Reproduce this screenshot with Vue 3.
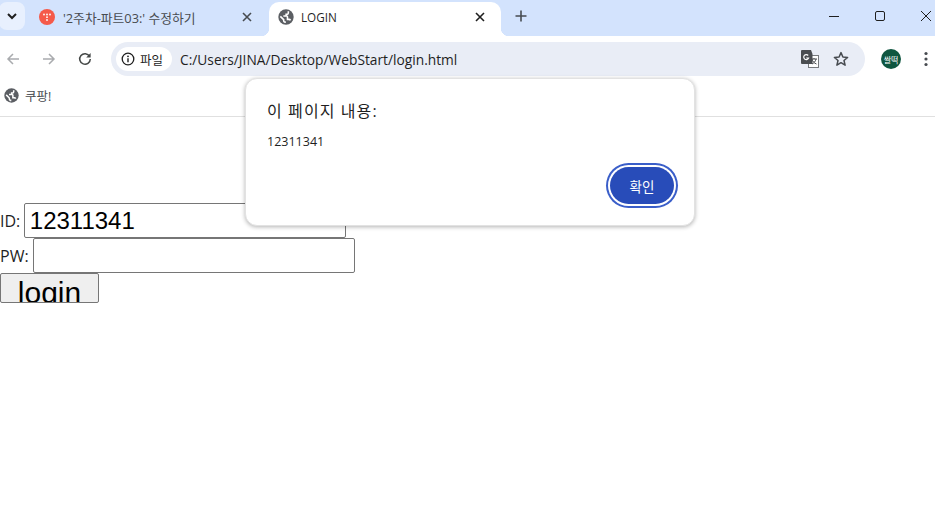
<script setup>
</script>

<template>
  <div class="window">
    <header class="tabstrip">
      <button class="tabsearch">
        <svg width="12" height="12" viewBox="0 0 12 12"><path d="M2 4l4 4 4-4" fill="none" stroke="#1f1f1f" stroke-width="2"/></svg>
      </button>
      <div class="tab">
        <span class="favicon-t"><svg width="12" height="12" viewBox="0 0 12 12" fill="#fff"><circle cx="3" cy="3.5" r=".9"/><circle cx="6" cy="3.5" r=".9"/><circle cx="9" cy="3.5" r=".9"/><circle cx="6" cy="6.2" r=".9"/><circle cx="6" cy="9" r=".9"/></svg></span>
        <span class="tab-title first">'2주차-파트03:' 수정하기</span>
        <svg class="tab-close" width="10" height="10" viewBox="0 0 10 10"><path d="M1 1l8 8M9 1l-8 8" stroke="#474b50" stroke-width="1.6"/></svg>
      </div>
      <div class="tab active">
        <svg class="globe" width="16" height="16" viewBox="0 0 24 24"><circle cx="12" cy="12" r="11.500" fill="#5b5e63"/><path d="M3.500 11l5 5v1.500c0 1 .8 2 2 2V21M8 10.500h5c.7 0 1.200.5 1.200 1.200v3.800h2.300c1 0 1.800.6 2.200 1.500M11 8h2.500c1.200 0 2-1 2-2V3.500" fill="none" stroke="#fff" stroke-width="2.400"/></svg>
        <span class="tab-title dark">LOGIN</span>
        <svg class="tab-close" width="10" height="10" viewBox="0 0 10 10"><path d="M1 1l8 8M9 1l-8 8" stroke="#1f1f1f" stroke-width="1.6"/></svg>
      </div>
      <svg class="newtab" width="12" height="12" viewBox="0 0 12 12"><path d="M6 .5v11M.5 6h11" stroke="#474b50" stroke-width="1.6"/></svg>
      <div class="winctl">
        <svg width="12" height="12" viewBox="0 0 12 12"><path d="M1 6.500h10" stroke="#1f1f1f" stroke-width="1"/></svg>
        <svg width="12" height="12" viewBox="0 0 12 12"><rect x="1.500" y="1.500" width="9" height="9" rx="1.500" fill="none" stroke="#1f1f1f"/></svg>
        <svg width="12" height="12" viewBox="0 0 12 12"><path d="M1 1l10 10M11 1L1 11" stroke="#1f1f1f"/></svg>
      </div>
    </header>

    <nav class="toolbar">
      <svg class="nav-icon" width="14" height="14" viewBox="0 0 14 14"><path d="M13 7H2M7 2L2 7l5 5" fill="none" stroke="#a9abae" stroke-width="1.500"/></svg>
      <svg class="nav-icon" width="14" height="14" viewBox="0 0 14 14"><path d="M1 7h11M7 2l5 5-5 5" fill="none" stroke="#a9abae" stroke-width="1.500"/></svg>
      <svg class="nav-icon" width="14" height="14" viewBox="0 0 14 14"><path d="M11.600 4.300A5.300 5.300 0 1 0 12.300 7" fill="none" stroke="#444746" stroke-width="1.500"/><path d="M12.600 1v4.400H8.200z" fill="#444746"/></svg>
      <div class="omnibox">
        <div class="chip">
          <svg width="14" height="14" viewBox="0 0 14 14"><circle cx="7" cy="7" r="5.800" fill="none" stroke="#1f1f1f" stroke-width="1.300"/><path d="M7 6.200v4" stroke="#1f1f1f" stroke-width="1.400"/><circle cx="7" cy="4.300" r=".9" fill="#1f1f1f"/></svg>
          <span>파일</span>
        </div>
        <span class="url">C:/Users/JINA/Desktop/WebStart/login.html</span>
        <svg class="translate" width="18" height="18" viewBox="0 0 18 18">
          <rect x="7.500" y="5.500" width="10" height="12" fill="#fff" stroke="#777a7e"/>
          <path d="M1 0h9l1.500 4v10H1a1 1 0 0 1-1-1V1a1 1 0 0 1 1-1z" fill="#4a4d51"/>
          <path d="M7.200 5.500A2.500 2.500 0 1 0 7.600 8H5.200" fill="none" stroke="#fff" stroke-width="1.200"/>
          <path d="M10 9h6M13 8v1M11 9c.5 2.500 2 4 4.500 5M15 9c-.5 2.500-2 4-4 5" stroke="#4a4d51" fill="none"/>
        </svg>
        <svg class="star" width="16" height="16" viewBox="0 0 16 16"><path d="M8 1.600l1.900 4.400 4.700.4-3.600 3.100 1.100 4.700L8 11.700l-4.100 2.500L5 9.500 1.400 6.400l4.700-.4z" fill="none" stroke="#474b50" stroke-width="1.500" stroke-linejoin="round"/></svg>
      </div>
      <span class="avatar">쌀떡</span>
      <svg class="menu" width="4" height="16" viewBox="0 0 4 16"><circle cx="2" cy="2.500" r="1.600" fill="#474b50"/><circle cx="2" cy="8" r="1.600" fill="#474b50"/><circle cx="2" cy="13.500" r="1.600" fill="#474b50"/></svg>
    </nav>

    <div class="bookmarks">
      <svg width="15" height="15" viewBox="0 0 24 24"><circle cx="12" cy="12" r="11.500" fill="#5b5e63"/><path d="M3.500 11l5 5v1.500c0 1 .8 2 2 2V21M8 10.500h5c.7 0 1.200.5 1.200 1.200v3.800h2.300c1 0 1.800.6 2.200 1.500M11 8h2.500c1.200 0 2-1 2-2V3.500" fill="none" stroke="#fff" stroke-width="2.400"/></svg>
      <span>쿠팡!</span>
    </div>

    <main class="page">
      <div class="field"><label>ID:</label><input class="box" value="12311341" /></div>
      <div class="field"><label>PW:</label><input class="box" /></div>
      <button class="login">login</button>
    </main>

    <div class="dialog">
      <p class="d-title">이 페이지 내용:</p>
      <p class="d-msg">12311341</p>
      <div class="d-actions"><button class="ok">확인</button></div>
    </div>
  </div>
</template>

<style>
html, body { margin: 0; background: #fff; overflow: hidden; }
</style>

<style scoped>
.window {
  position: relative;
  width: 935px;
  height: 506px;
  overflow: hidden;
  background: #fff;
  font-family: "Open Sans", "Noto Sans CJK KR", sans-serif;
  color: #1f1f1f;
}
.tabstrip {
  display: flex;
  align-items: flex-end;
  height: 36px;
  background: #d3e3fd;
}
.tabsearch {
  align-self: flex-start;
  margin: 2px 0 0 -1px;
  width: 26px;
  height: 28px;
  border: 0;
  border-radius: 8px;
  background: #e8f0fe;
  display: flex;
  align-items: center;
  justify-content: center;
  padding: 0;
}
.tab {
  display: flex;
  align-items: center;
  box-sizing: border-box;
  height: 34px;
  padding: 0 17px 4px 14px;
  font-size: 12px;
  color: #474b50;
}
.tab:not(.active) { width: 244px; }
.tab.active {
  position: relative;
  width: 232px;
  background: #fff;
  border-radius: 10px 10px 0 0;
  padding-left: 9px;
  padding-right: 16px;
}
.tab.active::before, .tab.active::after {
  content: "";
  position: absolute;
  bottom: 0;
  width: 8px;
  height: 8px;
}
.tab.active::before { left: -8px; background: radial-gradient(circle at 0 0, transparent 8px, #fff 8.5px); }
.tab.active::after { right: -8px; background: radial-gradient(circle at 100% 0, transparent 8px, #fff 8.5px); }
.favicon-t {
  width: 16px;
  height: 16px;
  border-radius: 50%;
  background: #f55a4a;
  display: flex;
  align-items: center;
  justify-content: center;
  flex: none;
}
.tab-title { margin-left: 8px; flex: 1; white-space: nowrap; }
.tab-title.first { font-size: 12.8px; }
.tab-title.dark { color: #1f1f1f; margin-left: 7px; font-size: 11.7px; }
.tab-close { flex: none; }
.newtab { margin: 0 0 14px 14px; }
.winctl {
  margin-left: auto;
  align-self: flex-start;
  display: flex;
  gap: 34px;
  padding: 10px 3px 0 0;
}
.toolbar {
  display: flex;
  align-items: center;
  height: 40px;
  padding-top: 6px;
  box-sizing: border-box;
}
.nav-icon { margin-left: 6px; width: 14px; flex: none; }
.nav-icon + .nav-icon { margin-left: 22px; }
.omnibox {
  display: flex;
  align-items: center;
  width: 754px;
  height: 34px;
  margin-left: 19px;
  box-sizing: border-box;
  padding: 0 16px 0 5px;
  border-radius: 17px;
  background: #e9edf6;
}
.chip {
  display: flex;
  align-items: center;
  gap: 5px;
  height: 24px;
  padding: 0 9px 0 5px;
  border-radius: 12px;
  background: #fff;
  font-size: 12.5px;
}
.url { margin-left: 8px; font-size: 13.75px; flex: 1; white-space: nowrap; }
.translate { margin-right: 14px; }
.avatar {
  width: 20px;
  height: 20px;
  margin-left: 16px;
  border-radius: 50%;
  background: #0f5640;
  color: #fff;
  font-size: 8px;
  display: flex;
  align-items: center;
  justify-content: center;
  flex: none;
}
.menu { margin-left: 23px; flex: none; }
.bookmarks {
  display: flex;
  align-items: center;
  gap: 6px;
  height: 41px;
  padding: 0 0 2px 4px;
  box-sizing: border-box;
  border-bottom: 1px solid #e0e0e0;
  font-size: 12.5px;
  color: #474b50;
}
.page { padding-top: 86px; }
.field { display: flex; align-items: center; height: 35px; }
.field label { font: 16px "Open Sans", sans-serif; margin-right: 4px; color: #1f1f1f; white-space: nowrap; }
.box {
  box-sizing: border-box;
  width: 322px;
  height: 35px;
  padding: 1px 4.5px;
  border: 1px solid #767676;
  border-radius: 2px;
  font: 24px "Liberation Sans", Arial, sans-serif;
  color: #000;
  background: #fff;
  outline: none;
}
.login {
  display: block;
  box-sizing: border-box;
  width: 99px;
  height: 30px;
  padding: 4px 0 0;
  overflow: hidden;
  border: 1px solid #767676;
  border-radius: 2px;
  background: #efefef;
  color: #000;
  font: 30px/30px "Liberation Sans", Arial, sans-serif;
}
.dialog {
  position: absolute;
  left: 245px;
  top: 78px;
  box-sizing: border-box;
  width: 450px;
  height: 148px;
  padding: 22px 20px 0 21px;
  background: #fff;
  border: 1px solid #e2e2e2;
  border-radius: 12px;
  box-shadow: 0 1px 4px rgba(0, 0, 0, .3);
}
.d-title { margin: 0; font-size: 16px; line-height: 20px; color: #1f1f1f; letter-spacing: 1.1px; }
.d-msg { margin: 13px 0 0; font-size: 12.5px; line-height: 16px; color: #1f1f1f; }
.d-actions { display: flex; justify-content: flex-end; margin-top: 17px; }
.ok {
  width: 64px;
  height: 37px;
  padding: 0;
  border: 0;
  border-radius: 19px;
  background: #284cb9;
  color: #fff;
  font: 13.5px "Open Sans", "Noto Sans CJK KR", sans-serif;
  box-shadow: 0 0 0 2px #fff, 0 0 0 4px #3a5ec9;
}
</style>
